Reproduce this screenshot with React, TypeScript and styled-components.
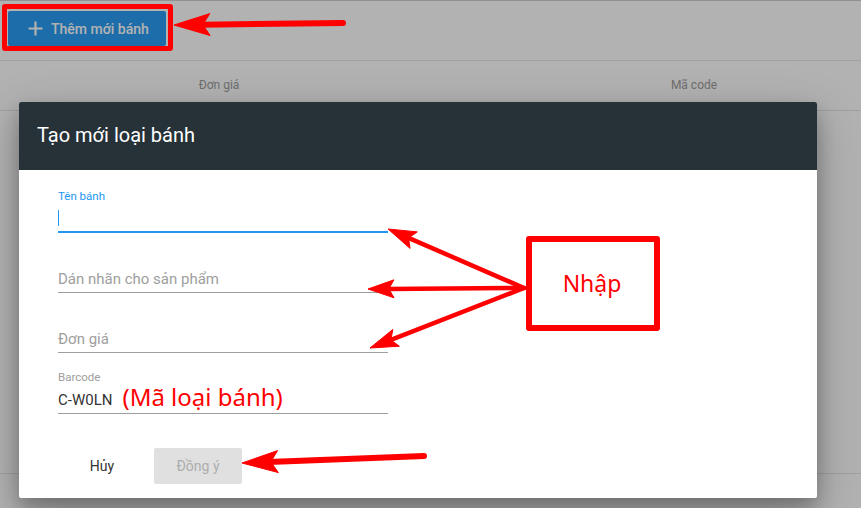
import React from "react";
import styled, { createGlobalStyle } from "styled-components";

const Global = createGlobalStyle`
  html, body { margin: 0; padding: 0; background: #fff; }
  body { width: 861px; height: 508px; overflow: hidden; font-family: Roboto, "Noto Sans", sans-serif; }
  #root { position: relative; width: 861px; height: 508px; overflow: hidden; }
`;

const Page = styled.div`
  width: 861px;
  height: 508px;
  background: #fff;
  border-top: 1px solid #cfcfcf;
  box-sizing: border-box;
`;

const Toolbar = styled.div`
  height: 60px;
  box-sizing: border-box;
  padding: 10px 0 0 8px;
  border-bottom: 1px solid #e6e6e6;
  display: flex;
  align-items: flex-start;
`;

const AddButton = styled.button`
  display: flex;
  align-items: center;
  gap: 8px;
  width: 158px;
  height: 35px;
  padding: 0 0 0 20px;
  border: none;
  border-radius: 2px;
  background: #2a9df4;
  color: #fff;
  font-family: Roboto, sans-serif;
  font-size: 14px;
  font-weight: 500;
`;

const TableHead = styled.div`
  display: grid;
  grid-template-columns: 438px 512px;
  height: 50px;
  box-sizing: border-box;
  border-bottom: 1px solid #e6e6e6;
  align-items: center;
`;

const HeadCell = styled.div`
  text-align: center;
  font-size: 12px;
  color: #9e9e9e;
  padding-bottom: 2px;
`;

const TableBody = styled.div`
  height: 362px;
  border-bottom: 1px solid #e6e6e6;
`;

const Overlay = styled.div`
  position: absolute;
  inset: 0;
  background: rgba(0, 0, 0, 0.3);
`;

const Dialog = styled.div`
  position: absolute;
  left: 19px;
  top: 102px;
  width: 798px;
  height: 396px;
  background: #fff;
  border-radius: 2px;
  display: flex;
  flex-direction: column;
  box-shadow: 0 14px 45px rgba(0, 0, 0, 0.25), 0 10px 18px rgba(0, 0, 0, 0.22);
`;

const DialogTitle = styled.div`
  height: 68px;
  background: #263238;
  color: #fff;
  font-size: 20px;
  display: flex;
  align-items: center;
  padding: 0 0 2px 18px;
  box-sizing: border-box;
  border-radius: 2px 2px 0 0;
`;

const DialogBody = styled.div`
  padding: 19px 0 0 39px;
  display: flex;
  flex-direction: column;
`;

const Field = styled.div<{ $h: number }>`
  width: 330px;
  height: ${(p) => p.$h}px;
  display: flex;
  flex-direction: column;
  justify-content: flex-end;
  position: relative;
`;

const FloatLabel = styled.div<{ $active?: boolean }>`
  font-size: 11.5px;
  color: ${(p) => (p.$active ? "#2196f3" : "#9e9e9e")};
  margin-bottom: 4px;
`;

const InputRow = styled.div<{ $active?: boolean }>`
  height: 26px;
  display: flex;
  align-items: center;
  gap: 10px;
  border-bottom: ${(p) => (p.$active ? "2px solid #2196f3" : "1px solid #9e9e9e")};
  box-sizing: border-box;
  padding-bottom: ${(p) => (p.$active ? "3px" : "2px")};
`;

const Caret = styled.span`
  width: 1px;
  height: 16px;
  background: #2196f3;
`;

const Placeholder = styled.span`
  font-size: 15px;
  color: #9e9e9e;
`;

const Value = styled.span`
  font-size: 15px;
  color: #333;
`;

const NoteText = styled.span`
  font-family: "Noto Sans", "Open Sans", sans-serif;
  font-size: 24px;
  color: #f00;
  line-height: 1;
  margin-top: -6px;
`;

const Actions = styled.div`
  display: flex;
  gap: 8px;
  padding: 34px 0 0 39px;
`;

const FlatButton = styled.button`
  min-width: 88px;
  height: 36px;
  border: none;
  background: transparent;
  border-radius: 2px;
  font-family: Roboto, sans-serif;
  font-size: 14px;
  color: #333;
  padding: 0 16px;
`;

const DisabledButton = styled(FlatButton)`
  background: #e0e0e0;
  color: #adadad;
`;

const RedBox = styled.div<{ $b: number }>`
  position: absolute;
  box-sizing: border-box;
  border: ${(p) => p.$b}px solid #f00;
  border-radius: 3px;
`;

const TopBox = styled(RedBox)`
  left: 2px;
  top: 4px;
  width: 171px;
  height: 47px;
`;

const NhapBox = styled(RedBox)`
  left: 526px;
  top: 236px;
  width: 134px;
  height: 95px;
  background: #fff;
  display: flex;
  align-items: center;
  justify-content: center;
  font-family: "Noto Sans", "Open Sans", sans-serif;
  font-size: 23px;
  color: #f00;
  padding: 0 2px 2px 0;
`;

const ArrowLayer = styled.svg`
  position: absolute;
  left: 0;
  top: 0;
  pointer-events: none;
`;

type ArrowProps = { x1: number; y1: number; x2: number; y2: number; w: number; head: number; hw: number };

function Arrow({ x1, y1, x2, y2, w, head, hw }: ArrowProps) {
  const dx = x2 - x1;
  const dy = y2 - y1;
  const len = Math.hypot(dx, dy);
  const ux = dx / len;
  const uy = dy / len;
  const bx = x2 - ux * head;
  const by = y2 - uy * head;
  const nx = -uy;
  const ny = ux;
  const nb = 0.2;
  const ix = x2 - ux * head * (1 - nb);
  const iy = y2 - uy * head * (1 - nb);
  const pts = [
    `${x2},${y2}`,
    `${bx + nx * hw},${by + ny * hw}`,
    `${ix},${iy}`,
    `${bx - nx * hw},${by - ny * hw}`,
  ].join(" ");
  return (
    <g fill="#f00" stroke="#f00">
      <line x1={x1} y1={y1} x2={ix + ux * 2} y2={iy + uy * 2} strokeWidth={w} strokeLinecap="round" />
      <polygon points={pts} strokeWidth={1} strokeLinejoin="round" />
    </g>
  );
}

function PlusIcon() {
  return (
    <svg width="15" height="15" viewBox="0 0 15 15">
      <path d="M7.5 0.5v14M0.5 7.5h14" stroke="currentColor" strokeWidth="2.2" />
    </svg>
  );
}

export default function App() {
  return (
    <>
      <Global />
      <Page>
        <Toolbar>
          <AddButton>
            <PlusIcon />
            Thêm mới bánh
          </AddButton>
        </Toolbar>
        <TableHead>
          <HeadCell>Đơn giá</HeadCell>
          <HeadCell>Mã code</HeadCell>
        </TableHead>
        <TableBody />
      </Page>
      <Overlay />
      <Dialog>
        <DialogTitle>Tạo mới loại bánh</DialogTitle>
        <DialogBody>
          <Field $h={44}>
            <FloatLabel $active>Tên bánh</FloatLabel>
            <InputRow $active>
              <Caret />
            </InputRow>
          </Field>
          <Field $h={60}>
            <InputRow>
              <Placeholder>Dán nhãn cho sản phẩm</Placeholder>
            </InputRow>
          </Field>
          <Field $h={60}>
            <InputRow>
              <Placeholder>Đơn giá</Placeholder>
            </InputRow>
          </Field>
          <Field $h={61}>
            <FloatLabel>Barcode</FloatLabel>
            <InputRow>
              <Value>C-W0LN</Value>
              <NoteText>(Mã loại bánh)</NoteText>
            </InputRow>
          </Field>
        </DialogBody>
        <Actions>
          <FlatButton>Hủy</FlatButton>
          <DisabledButton>Đồng ý</DisabledButton>
        </Actions>
      </Dialog>
      <TopBox $b={5} />
      <NhapBox $b={6}>Nhập</NhapBox>
      <ArrowLayer width="861" height="508" viewBox="0 0 861 508">
        <Arrow x1={343} y1={23} x2={174} y2={25} w={6} head={36} hw={11} />
        <Arrow x1={524} y1={288} x2={388} y2={229} w={4.5} head={28} hw={9} />
        <Arrow x1={524} y1={288} x2={368} y2={289} w={4.5} head={26} hw={9} />
        <Arrow x1={524} y1={288} x2={370} y2={348} w={4.5} head={28} hw={9} />
        <Arrow x1={424} y1={456} x2={242} y2={463} w={6} head={36} hw={11} />
      </ArrowLayer>
    </>
  );
}
